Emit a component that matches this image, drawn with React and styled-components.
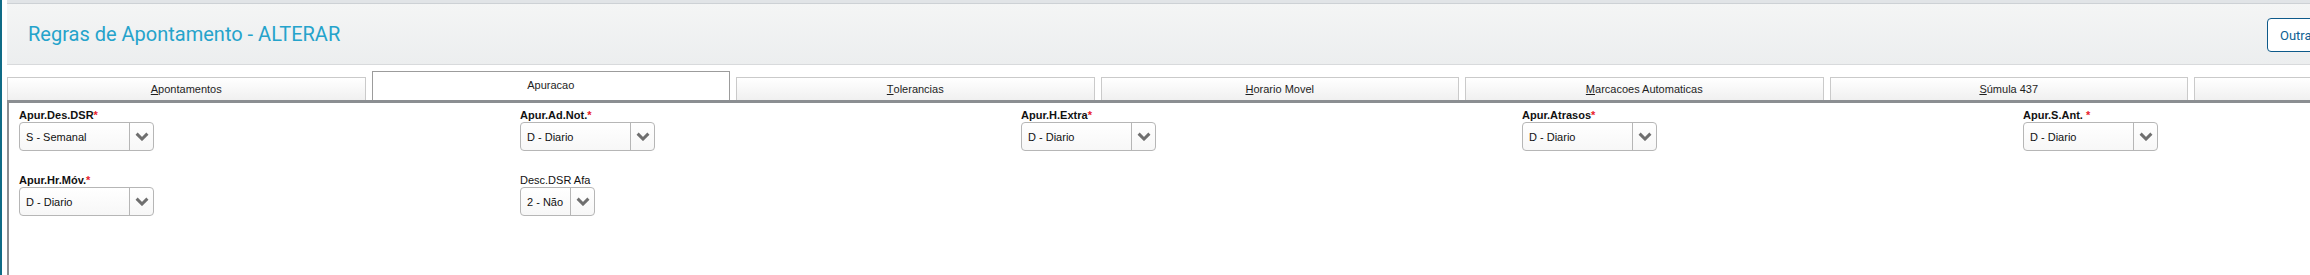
import React from 'react'
import styled, { createGlobalStyle } from 'styled-components';

const GlobalStyle = createGlobalStyle`
  body {
    margin: 0;
    background: #fff;
    font-family: "Liberation Sans", Arial, sans-serif;
    overflow: hidden;
  }
`;

const Page = styled.div`
  display: flex;
  height: 275px;
  width: 2310px;
  overflow: hidden;
`;

const SideRail = styled.div`
  flex: 0 0 2px;
  background: #0f6b86;
`;

const Main = styled.div`
  flex: 1;
  min-width: 0;
  padding-left: 5px;
  overflow: hidden;
`;

const TopStrip = styled.div`
  height: 3px;
  background: #e1e4e7;
  border-bottom: 1px solid #cdd1d5;
`;

const HeaderBar = styled.div`
  height: 61px;
  display: flex;
  align-items: center;
  justify-content: space-between;
  padding: 2px 0 0 21px;
  box-sizing: border-box;
  background: linear-gradient(#f4f5f5, #eceeef);
  border-bottom: 1px solid #d8dadc;
`;

const Title = styled.h1`
  margin: 0 0 3px;
  font-family: Roboto, "Liberation Sans", sans-serif;
  font-weight: 400;
  font-size: 20px;
  color: #25a3cb;
`;

const ActionButton = styled.button`
  flex: 0 0 120px;
  box-sizing: border-box;
  height: 34px;
  margin-right: -77px;
  padding: 0 0 0 12px;
  text-align: left;
  background: #fff;
  border: 1px solid #0e5a8a;
  border-radius: 4px;
  font-family: Roboto, "Liberation Sans", sans-serif;
  font-size: 13px;
  color: #0d5f93;
  white-space: nowrap;
`;

const TabRow = styled.div`
  display: flex;
  align-items: flex-end;
  gap: 6px;
  height: 29px;
  margin-top: 6px;
`;

const Tab = styled.div`
  flex: 0 0 358.5px;
  box-sizing: border-box;
  height: ${({ $active }) => ($active ? 29 : 23)}px;
  display: flex;
  align-items: center;
  justify-content: center;
  padding-bottom: ${({ $active }) => ($active ? 2 : 0)}px;
  border: 1px solid ${({ $active }) => ($active ? '#9c9c9c' : '#cacaca')};
  border-bottom: none;
  background: ${({ $active }) => ($active ? '#fff' : 'linear-gradient(#fff, #f0f0f0)')};
  font-size: 11px;
  color: #1e1e1e;
  white-space: nowrap;
`;

const Content = styled.div`
  border-top: 3px solid #8b8e92;
  border-left: 2px solid #8b8e92;
  padding: 6px 0 0 10px;
  display: grid;
  grid-template-columns: repeat(5, 501px);
  row-gap: 23px;
  height: 200px;
  align-content: start;
`;

const Field = styled.div`
  display: flex;
  flex-direction: column;
  align-items: flex-start;
`;

const Label = styled.label`
  font-size: 11px;
  line-height: 13px;
  font-weight: ${({ $required }) => ($required ? 700 : 400)};
  color: #111;
  white-space: pre;
`;

const Star = styled.span`
  color: #e8202a;
`;

const SelectBox = styled.div`
  box-sizing: border-box;
  width: ${({ $width }) => $width}px;
  height: 29px;
  display: flex;
  border: 1px solid #b6b6b6;
  border-radius: 4px;
  background: linear-gradient(#fff, #f7f7f7);
`;

const SelectValue = styled.span`
  flex: 1;
  display: flex;
  align-items: center;
  padding-left: 6px;
  font-size: 11px;
  color: #111;
  white-space: nowrap;
`;

const ArrowCell = styled.span`
  flex: 0 0 23px;
  display: flex;
  align-items: center;
  justify-content: center;
  border-left: 1px solid #b6b6b6;
`;

const Chevron = () => (
  <svg width="14" height="9" viewBox="0 0 14 9">
    <path d="M1.6 1.6 L7 7 L12.4 1.6" fill="none" stroke="#6f6f6f" strokeWidth="3" />
  </svg>
);

const tabs = [
  { key: 'A', rest: 'pontamentos' },
  { key: '', rest: 'Apuracao', active: true },
  { key: 'T', rest: 'olerancias' },
  { key: 'H', rest: 'orario Movel' },
  { key: 'M', rest: 'arcacoes Automaticas' },
  { key: 'S', rest: 'úmula 437' },
  { key: '', rest: '' },
];

const fields = [
  { label: 'Apur.Des.DSR', value: 'S - Semanal', required: true },
  { label: 'Apur.Ad.Not.', value: 'D - Diario', required: true },
  { label: 'Apur.H.Extra', value: 'D - Diario', required: true },
  { label: 'Apur.Atrasos', value: 'D - Diario', required: true },
  { label: 'Apur.S.Ant. ', value: 'D - Diario', required: true },
  { label: 'Apur.Hr.Móv.', value: 'D - Diario', required: true },
  { label: 'Desc.DSR Afa', value: '2 - Não', width: 75 },
];

const App = () => {
  return (
    <>
      <GlobalStyle />
      <Page>
        <SideRail />
        <Main>
          <TopStrip />
          <HeaderBar>
            <Title>Regras de Apontamento - ALTERAR</Title>
            <ActionButton>Outras Ações</ActionButton>
          </HeaderBar>
          <TabRow>
            {tabs.map((t, i) => (
              <Tab key={i} $active={t.active}>
                {t.key && <u>{t.key}</u>}{t.rest}
              </Tab>
            ))}
          </TabRow>
          <Content>
            {fields.map(f => (
              <Field key={f.label}>
                <Label $required={f.required}>
                  {f.label}{f.required && <Star>*</Star>}
                </Label>
                <SelectBox $width={f.width || 135}>
                  <SelectValue>{f.value}</SelectValue>
                  <ArrowCell><Chevron /></ArrowCell>
                </SelectBox>
              </Field>
            ))}
          </Content>
        </Main>
      </Page>
    </>
  )
}

export default App
